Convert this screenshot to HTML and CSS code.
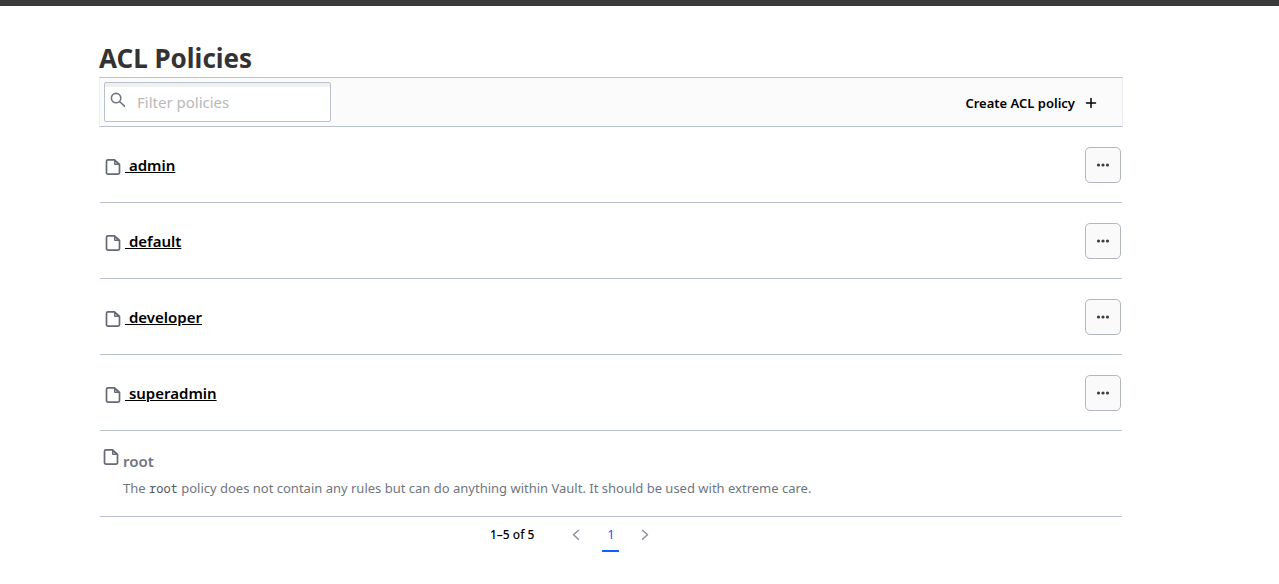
FILE: index.html
```html
<!DOCTYPE html>
<html lang="en">
<head>
<meta charset="utf-8">
<title>ACL Policies</title>
<link rel="stylesheet" href="styles.css">
</head>
<body>
<svg class="sprite" aria-hidden="true">
  <symbol id="file" viewBox="0 0 16 16"><path fill="none" stroke="currentColor" stroke-width="1.7" stroke-linejoin="round" d="M9.500 .9H3A1.500 1.500 0 0 0 1.500 2.400v11.200A1.500 1.500 0 0 0 3 15.100h10a1.500 1.500 0 0 0 1.500-1.500V5.500z"/><path fill="currentColor" fill-opacity=".6" stroke="currentColor" stroke-width="1" stroke-linejoin="round" d="M9.500 1v4.500h4.750z"/></symbol>
  <symbol id="dots" viewBox="0 0 16 16"><g fill="currentColor"><circle cx="3.500" cy="8" r="1.600"/><circle cx="8" cy="8" r="1.600"/><circle cx="12.500" cy="8" r="1.600"/></g></symbol>
</svg>
<header class="topbar"></header>
<main class="page">
  <h1 class="title">ACL Policies</h1>
  <div class="toolbar">
    <div class="filter">
      <svg class="filter-icon" viewBox="0 0 16 16" aria-hidden="true"><path fill="none" stroke="currentColor" stroke-width="1.6" stroke-linecap="round" d="M10.800 6.100a4.700 4.700 0 1 1-9.400 0a4.700 4.700 0 0 1 9.400 0zM9.600 9.500l4.900 4.700"/></svg>
      <input class="filter-input" type="text" placeholder="Filter policies" aria-label="Filter policies">
    </div>
    <a class="create" href="#create">Create ACL policy
      <svg class="plus" viewBox="0 0 16 16" aria-hidden="true"><path fill="none" stroke="currentColor" stroke-width="1.500" stroke-linecap="round" d="M8 3.500v9M3.500 8h9"/></svg>
    </a>
  </div>
  <ul class="policies">
    <li class="row"><svg class="file"><use href="#file"/></svg><a class="name" href="#admin">&nbsp;admin</a><button class="more" aria-label="Manage admin"><svg class="dots"><use href="#dots"/></svg></button></li>
    <li class="row"><svg class="file"><use href="#file"/></svg><a class="name" href="#default">&nbsp;default</a><button class="more" aria-label="Manage default"><svg class="dots"><use href="#dots"/></svg></button></li>
    <li class="row"><svg class="file"><use href="#file"/></svg><a class="name" href="#developer">&nbsp;developer</a><button class="more" aria-label="Manage developer"><svg class="dots"><use href="#dots"/></svg></button></li>
    <li class="row"><svg class="file"><use href="#file"/></svg><a class="name" href="#superadmin">&nbsp;superadmin</a><button class="more" aria-label="Manage superadmin"><svg class="dots"><use href="#dots"/></svg></button></li>
    <li class="row root">
      <svg class="file"><use href="#file"/></svg>
      <div class="root-text">
        <div class="root-name">root</div>
        <p class="note">The <code class="code">root</code> policy does not contain any rules but can do anything within Vault. It should be used with extreme care.</p>
      </div>
    </li>
  </ul>
  <nav class="pager" aria-label="Pagination">
    <span class="range">1–5 of 5</span>
    <button class="arrow" aria-label="Previous page" disabled><svg class="chevron" viewBox="0 0 16 16"><path fill="none" stroke="currentColor" stroke-width="1.500" stroke-linecap="round" stroke-linejoin="round" d="M10.500 3.250L5.500 7.750l5 4.500"/></svg></button>
    <a class="current" href="#1" aria-current="page">1</a>
    <button class="arrow" aria-label="Next page" disabled><svg class="chevron" viewBox="0 0 16 16"><path fill="none" stroke="currentColor" stroke-width="1.500" stroke-linecap="round" stroke-linejoin="round" d="M5.500 3.250l5 4.500l-5 4.500"/></svg></button>
  </nav>
</main>
</body>
</html>
```
FILE: styles.css
```css
* { box-sizing: border-box; }
body { margin: 0; background: #fff; color: #000; font-family: "Segoe UI", "Noto Sans", "Open Sans", sans-serif; font-size: 15px; }
svg { display: block; flex: none; }
.sprite { position: absolute; width: 0; height: 0; }
.topbar { height: 6px; background: #3b3b3b; }
.page { padding: 35px 156px 0 99px; }
.title { margin: 0; padding-bottom: 2px; font-size: 26px; line-height: 34px; font-weight: 700; color: #333; }
.toolbar { display: flex; align-items: center; justify-content: space-between; height: 50px; padding: 0 23px 0 4px; background: #fbfbfb; border: 1px solid; border-color: #bac1cc #ebeef2; }
.filter { position: relative; }
.filter-input { display: block; width: 227px; height: 40px; padding: 0 8px 0 32px; border: 1px solid #bac1cc; border-radius: 2px; background: #fff; box-shadow: inset 0 4px 0 #f0f0f0; font: inherit; color: #333; }
.filter-input::placeholder { color: #b8b8b8; opacity: 1; }
.filter-icon { position: absolute; left: 6px; top: 10px; width: 16px; height: 16px; color: #6f7682; }
.create { display: flex; align-items: center; gap: 8px; padding-top: 2px; color: #000; font-size: 13px; font-weight: 600; text-decoration: none; }
.plus { width: 16px; height: 16px; }
.policies { list-style: none; margin: 0 1px; padding: 0; }
.row { display: flex; align-items: center; height: 76px; padding: 0 1px 0 5px; border-bottom: 1px solid #bac1cc; }
.file { width: 16px; height: 16px; margin: 4px 4px 0 0; color: #656a76; }
.name { color: #000; font-weight: 600; text-underline-offset: 1px; line-height: 24px; margin-right: auto; }
.more { display: grid; place-items: center; width: 36px; height: 36px; padding: 0; border: 1px solid #b2b6bd; border-radius: 5px; background: #fafafa; color: #3b3d45; }
.dots { width: 16px; height: 16px; }
.root { align-items: flex-start; height: 86px; padding: 18px 0 0 3px; }
.root .file { margin-top: 0; }
.root-name { color: #6f7682; font-weight: 600; line-height: 24px; }
.note { margin: 3px 0 0; color: #6f7682; font-size: 13px; line-height: 24px; }
.code { font-family: "Noto Sans Mono", "DejaVu Sans Mono", monospace; font-size: 12px; color: #525761; }
.pager { display: flex; align-items: center; height: 35px; padding-left: 391px; font-size: 13px; }
.range { margin-right: 25px; font-size: 12px; line-height: 34px; font-weight: 500; }
.arrow { display: grid; place-items: center; width: 34px; height: 35px; padding: 0; border: 0; background: none; color: #8c909c; }
.chevron { width: 16px; height: 16px; }
.current { width: 17px; margin: 0 9px; height: 35px; line-height: 34px; border-bottom: 2px solid #1060ff; color: #1060ff; text-align: center; text-decoration: none; }
```
